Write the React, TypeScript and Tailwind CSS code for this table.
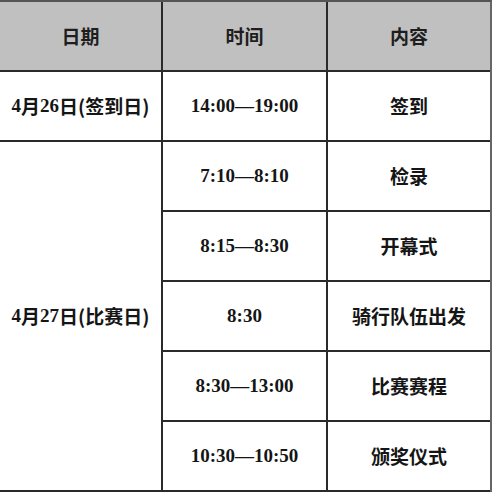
const rows = [
  { time: "14:00—19:00", content: "签到" },
  { time: "7:10—8:10", content: "检录" },
  { time: "8:15—8:30", content: "开幕式" },
  { time: "8:30", content: "骑行队伍出发" },
  { time: "8:30—13:00", content: "比赛赛程" },
  { time: "10:30—10:50", content: "颁奖仪式" },
];

const cell = "flex items-center justify-center border-b-2 border-[#2a2a2a]";
const body = "font-['Liberation_Serif','Noto_Sans_CJK_SC',serif] font-bold text-[19px] text-[#151515]";
const cjk = "font-['Noto_Sans_CJK_SC',sans-serif] font-bold";

const DateLabel = ({ day, note }: { day: string; note: string }) => (
  <>
    4<span className={cjk}>月</span>
    {day}
    <span className={cjk}>日({note})</span>
  </>
);

export default function App() {
  return (
    <div className="w-[494px] h-[493px] bg-white">
      <div className="grid w-[492px] grid-cols-[163px_165px_162px] grid-rows-[70px_repeat(6,70px)] border-t-2 border-r-2 border-t-[#555] border-r-[#666]">
        {/* header */}
        {["日期", "时间", "内容"].map((h, i) => (
          <div
            key={h}
            className={`${cell} bg-[#c0c0c0] ${i < 2 ? "border-r-2 border-r-[#2a2a2a]" : ""} font-['Noto_Sans_CJK_SC',sans-serif] font-bold text-[19px] text-[#1e1e1e]`}
          >
            {h}
          </div>
        ))}

        {/* signing day */}
        <div className={`${cell} border-r-2 border-r-[#2a2a2a] ${body}`}>
          <DateLabel day="26" note="签到日" />
        </div>
        <div className={`${cell} border-r-2 border-r-[#2a2a2a] ${body}`}>{rows[0].time}</div>
        <div className={`${cell} ${body} ${cjk}`}>{rows[0].content}</div>

        {/* race day */}
        <div className={`${cell} row-span-5 border-r-2 border-r-[#2a2a2a] ${body}`}>
          <DateLabel day="27" note="比赛日" />
        </div>
        {rows.slice(1).map((r) => (
          <div key={r.content} className="contents">
            <div className={`${cell} border-r-2 border-r-[#2a2a2a] ${body}`}>{r.time}</div>
            <div className={`${cell} ${body} ${cjk}`}>{r.content}</div>
          </div>
        ))}
      </div>
    </div>
  );
}
